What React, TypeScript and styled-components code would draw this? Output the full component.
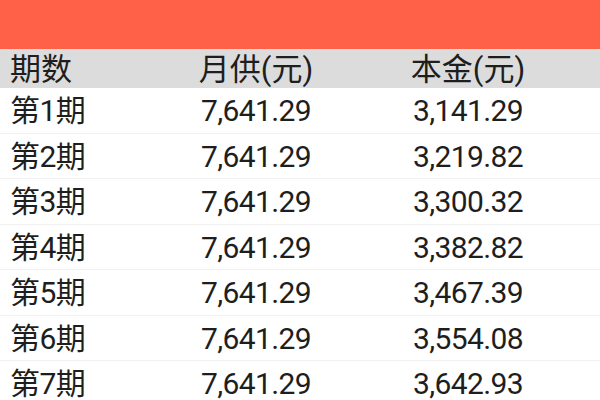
import * as React from 'react';
import styled, { createGlobalStyle } from 'styled-components';

const GlobalStyle = createGlobalStyle`
  html, body {
    margin: 0;
    padding: 0;
    background: #ffffff;
  }
  body {
    font-family: Roboto, "Noto Sans CJK SC", sans-serif;
    color: #1e1e1e;
  }
`;

const rows = [
  { period: '第1期', payment: '7,641.29', principal: '3,141.29' },
  { period: '第2期', payment: '7,641.29', principal: '3,219.82' },
  { period: '第3期', payment: '7,641.29', principal: '3,300.32' },
  { period: '第4期', payment: '7,641.29', principal: '3,382.82' },
  { period: '第5期', payment: '7,641.29', principal: '3,467.39' },
  { period: '第6期', payment: '7,641.29', principal: '3,554.08' },
  { period: '第7期', payment: '7,641.29', principal: '3,642.93' },
];

export default function App() {
  return (
    <>
      <GlobalStyle />
      <Page>
        <TopBar />
        <HeaderRow>
          <Cell $first>期数</Cell>
          <Cell>月供(元)</Cell>
          <Cell>本金(元)</Cell>
        </HeaderRow>
        {rows.map((r) => (
          <Row key={r.period}>
            <Cell $first>{r.period}</Cell>
            <Cell>{r.payment}</Cell>
            <Cell>{r.principal}</Cell>
          </Row>
        ))}
      </Page>
    </>
  );
}

const Page = styled.div`
  width: 600px;
  height: 400px;
  overflow: hidden;
  background: #ffffff;
`;

const TopBar = styled.div`
  height: 49px;
  background: #ff6048;
`;

const Row = styled.div`
  display: grid;
  grid-template-columns: 150px 212px 212px;
  align-items: center;
  height: 45.5px;
  padding-top: 2px;
  border-bottom: 1px solid #f1f1f1;
  box-sizing: border-box;
  font-size: 30px;
  letter-spacing: -0.6px;
`;

const HeaderRow = styled(Row)`
  height: 39px;
  padding-top: 1px;
  background: #dcdcdc;
  border-bottom: none;
  font-size: 31px;
  letter-spacing: 0;
`;

const Cell = styled.div<{ $first?: boolean }>`
  text-align: ${(p) => (p.$first ? 'left' : 'center')};
  padding-left: ${(p) => (p.$first ? '10px' : '0')};
  white-space: nowrap;
  line-height: 1;
`;
